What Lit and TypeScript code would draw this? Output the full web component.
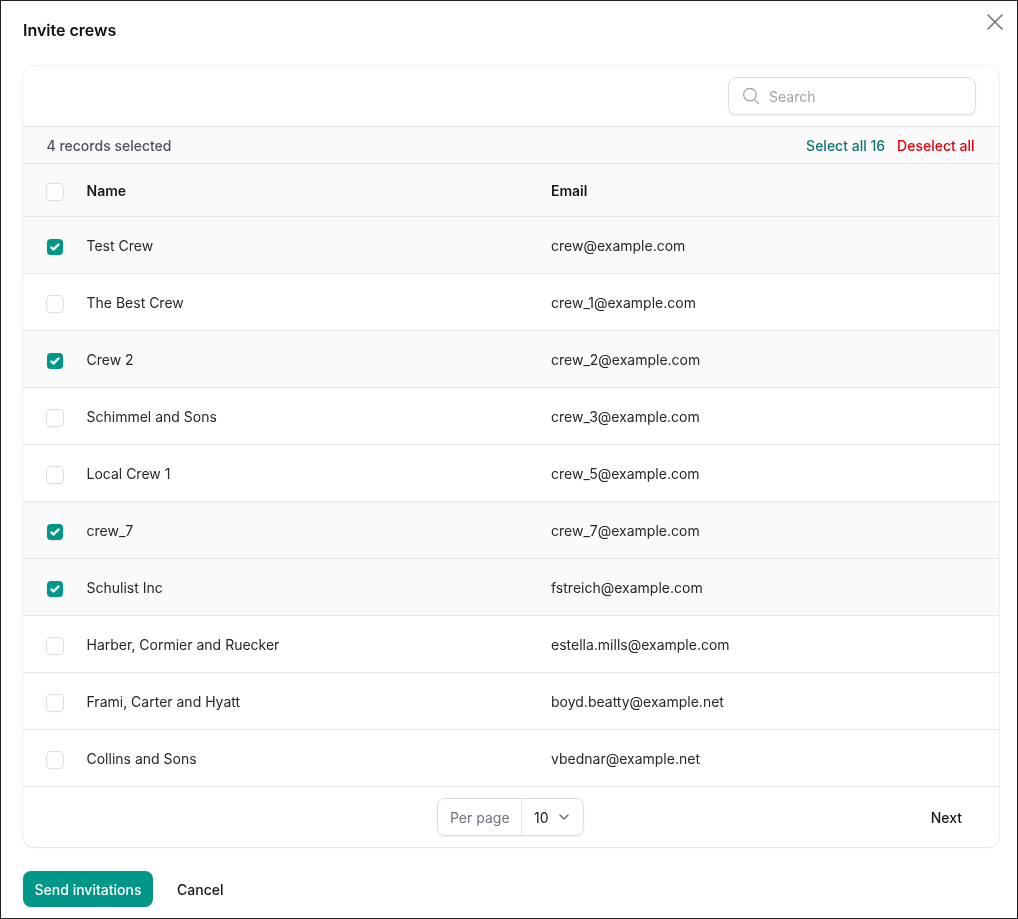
import { LitElement, html, css, svg } from "lit";
import { customElement } from "lit/decorators.js";

const rows: [string, string, boolean][] = [
  ["Test Crew", "crew@example.com", true],
  ["The Best Crew", "crew_1@example.com", false],
  ["Crew 2", "crew_2@example.com", true],
  ["Schimmel and Sons", "crew_3@example.com", false],
  ["Local Crew 1", "crew_5@example.com", false],
  ["crew_7", "crew_7@example.com", true],
  ["Schulist Inc", "fstreich@example.com", true],
  ["Harber, Cormier and Ruecker", "estella.mills@example.com", false],
  ["Frami, Carter and Hyatt", "boyd.beatty@example.net", false],
  ["Collins and Sons", "vbednar@example.net", false],
];

@customElement("app-root")
export class AppRoot extends LitElement {
  static styles = css`
    :host {
      display: block;
      box-sizing: border-box;
      height: 919px;
      border: 1px solid #222;
      background: #fff;
      font-family: Inter, "Liberation Sans", sans-serif;
      font-size: 14px;
      line-height: 20px;
      color: #18181b;
      position: relative;
      overflow: hidden;
    }
    * { box-sizing: border-box; }
    .close {
      position: absolute;
      top: 9px;
      right: 10px;
      width: 24px;
      height: 24px;
      color: #71717a;
      display: block;
    }
    .modal {
      padding: 17px 18px 11px 22px;
      display: flex;
      flex-direction: column;
      will-change: transform;
    }
    h2 {
      margin: 0;
      font-size: 16px;
      line-height: 24px;
      font-weight: 600;
      color: #0f0f12;
    }
    .card {
      margin-top: 24px;
      background: #fff;
      border-radius: 12px;
      box-shadow: 0 0 0 1px rgba(9,9,11,.05), 0 1px 2px rgba(0,0,0,.08);
      overflow: hidden;
    }
    .toolbar {
      height: 60px;
      display: flex;
      justify-content: flex-end;
      align-items: center;
      padding: 0 23px 0 0;
    }
    .search {
      width: 248px;
      height: 38px;
      border-radius: 8px;
      border: 1px solid #dcdce0;
      box-shadow: 0 1px 2px rgba(0,0,0,.07);
      display: flex;
      align-items: center;
      padding-left: 12px;
      gap: 8px;
      color: #a1a1aa;
    }
    .search span { padding-top: 2px; }
    .search svg { width: 20px; height: 20px; color: #a1a1aa; flex: none; }
    .selection {
      height: 37px;
      border-top: 1px solid #e5e5e7;
      background: #fafafa;
      display: flex;
      justify-content: space-between;
      align-items: center;
      padding: 2px 24.5px 0 23.5px;
      color: #52525b;
      font-weight: 500;
    }
    .actions { display: flex; gap: 12px; }
    .sel { color: #0f766e; }
    .desel { color: #e7000b; }
    .row {
      display: grid;
      grid-template-columns: 39.5px 464.5px 1fr;
      align-items: center;
      height: 57px;
      border-top: 1px solid #e7e7e9;
      padding: 2px 0 0 24px;
      color: #27272a;
    }
    .row.head {
      height: 53px;
      background: #fafafa;
      font-weight: 600;
      color: #18181b;
    }
    .row.on { background: #fafafa; }
    .cb {
      width: 16px;
      height: 16px;
      border-radius: 4px;
      background: #fff;
      box-shadow: 0 0 0 1px #dcdce0, 0 1px 2px rgba(0,0,0,.08);
      margin-top: 2px;
    }
    .cb.checked { background: #009688; box-shadow: 0 1px 2px rgba(0,0,0,.08); }
    .cb svg { width: 16px; height: 16px; color: #fff; display: block; }
    .pager {
      height: 61px;
      border-top: 1px solid #e7e7e9;
      display: grid;
      grid-template-columns: 1fr auto 1fr;
      align-items: center;
      padding: 0 26px 0 24px;
    }
    .perpage {
      grid-column: 2;
      display: flex;
      width: 147px;
      height: 38px;
      border: 1px solid #dcdce0;
      border-radius: 8px;
      box-shadow: 0 1px 2px rgba(0,0,0,.07);
      align-items: center;
    }
    .perpage .label {
      flex: none;
      width: 84px;
      padding: 2px 0 0 12.5px;
      color: #71717a;
      height: 100%;
      display: flex;
      align-items: center;
      border-right: 1px solid #e5e5e7;
    }
    .perpage .val {
      display: flex;
      align-items: center;
      padding-left: 12.5px;
      gap: 7px;
      color: #18181b;
    }
    .perpage .val span { padding-top: 2px; }
    .perpage svg { width: 16px; height: 16px; color: #71717a; display: block; }
    .next {
      justify-self: end;
      font-weight: 500;
      color: #18181b;
      margin-right: 11px;
      padding-top: 2px;
    }
    .footer {
      margin-top: 24px;
      display: flex;
      align-items: center;
      gap: 12px;
    }
    .primary {
      height: 36px;
      width: 130px;
      background: #009688;
      color: #fff;
      border-radius: 8px;
      font-weight: 500;
      padding-top: 2px;
      display: flex;
      align-items: center;
      justify-content: center;
    }
    .cancel {
      height: 36px;
      padding: 2px 12px 0;
      font-weight: 500;
      display: flex;
      align-items: center;
    }
  `;

  private box(checked: boolean) {
    return html`<div class="cb ${checked ? "checked" : ""}">
      ${checked
        ? html`<svg viewBox="0 0 16 16" fill="currentColor" stroke="currentColor" stroke-width="0.4">${svg`<path d="M12.207 4.793a1 1 0 010 1.414l-5 5a1 1 0 01-1.414 0l-2-2a1 1 0 011.414-1.414L6.5 9.086l4.293-4.293a1 1 0 011.414 0z"/>`}</svg>`
        : ""}
    </div>`;
  }

  render() {
    return html`
      <svg class="close" viewBox="0 0 24 24" fill="none" stroke="currentColor" stroke-width="1.5" stroke-linecap="round" stroke-linejoin="round"><path d="M5 5 19 19M19 5 5 19"/></svg>
      <div class="modal">
        <h2>Invite crews</h2>
        <div class="card">
          <div class="toolbar">
            <div class="search">
              <svg viewBox="0 0 24 24" fill="none" stroke="currentColor" stroke-width="1.5" stroke-linecap="round" stroke-linejoin="round"><path d="M21 21l-5.2-5.2m0 0A7.5 7.5 0 1 0 5.2 5.2a7.5 7.5 0 0 0 10.6 10.6Z"/></svg>
              <span>Search</span>
            </div>
          </div>
          <div class="selection">
            <span>4 records selected</span>
            <div class="actions"><span class="sel">Select all 16</span><span class="desel">Deselect all</span></div>
          </div>
          <div class="row head">
            ${this.box(false)}
            <span>Name</span>
            <span>Email</span>
          </div>
          ${rows.map(
            ([n, e, c]) => html`<div class="row ${c ? "on" : ""}">
              ${this.box(c)}
              <span>${n}</span>
              <span>${e}</span>
            </div>`
          )}
          <div class="pager">
            <div class="perpage">
              <div class="label">Per page</div>
              <div class="val">
                <span>10</span>
                <svg viewBox="0 0 20 20" fill="none" stroke="currentColor" stroke-width="2" stroke-linecap="round" stroke-linejoin="round"><path d="M5 7.5 10 12.5 15 7.5"/></svg>
              </div>
            </div>
            <div class="next">Next</div>
          </div>
        </div>
        <div class="footer">
          <div class="primary">Send invitations</div>
          <div class="cancel">Cancel</div>
        </div>
      </div>
    `;
  }
}
